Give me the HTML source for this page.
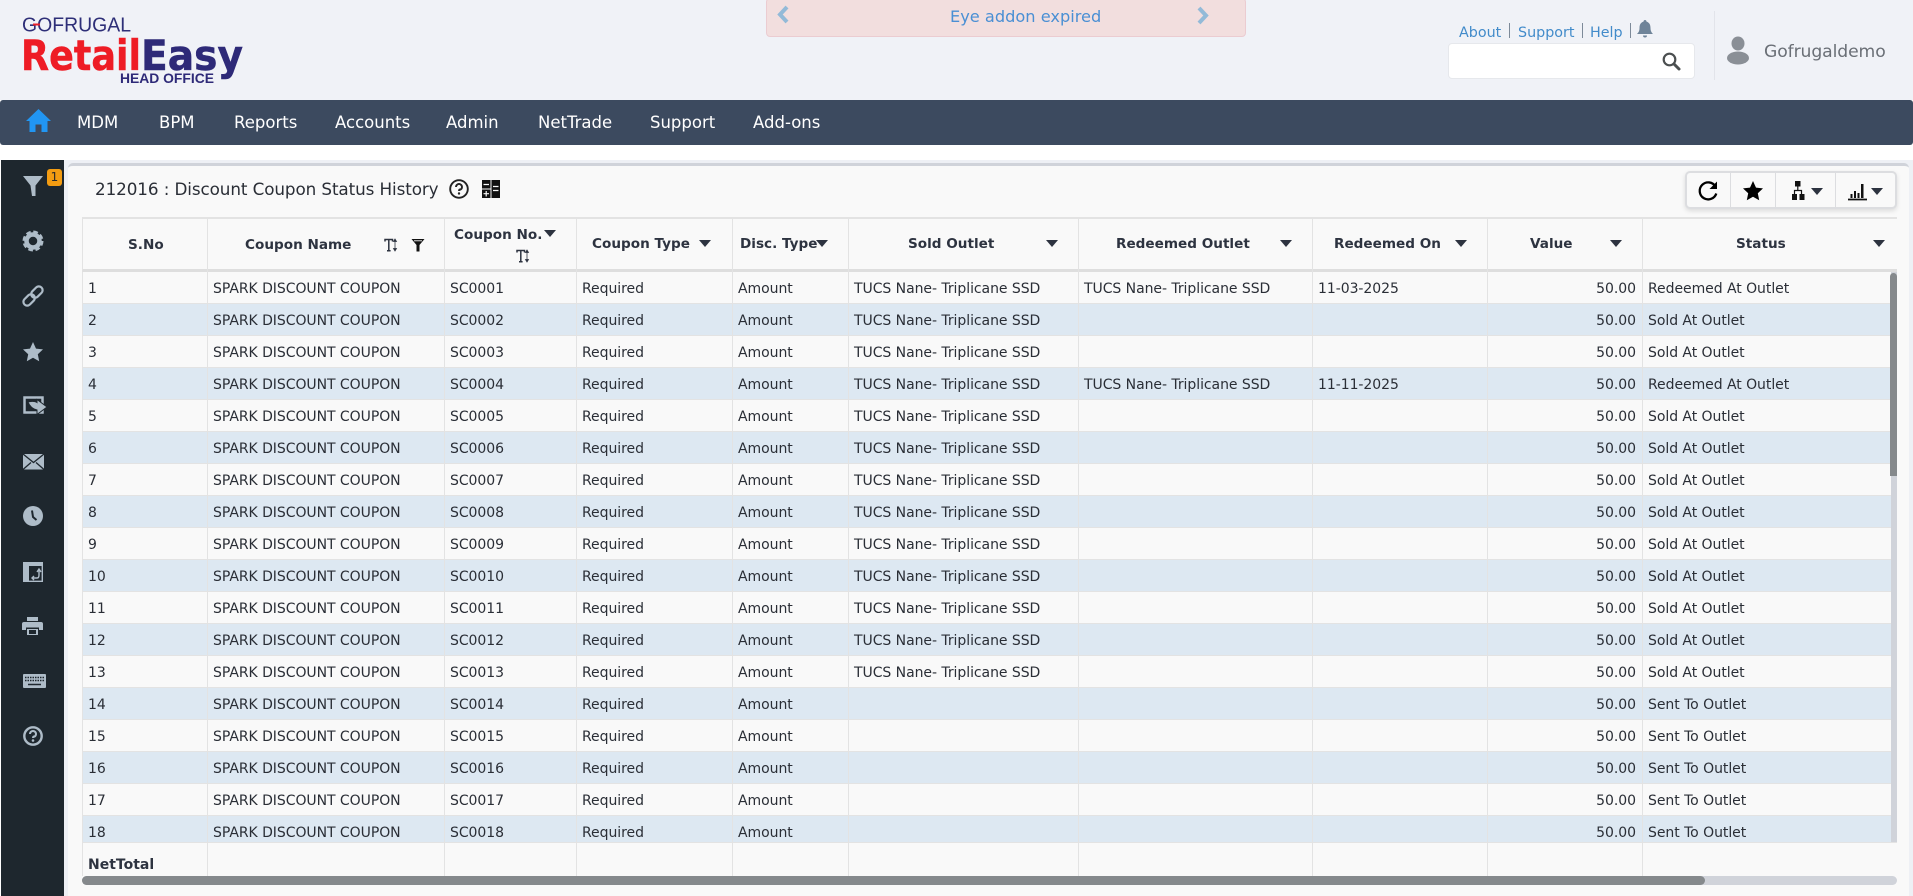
<!DOCTYPE html>
<html><head><meta charset="utf-8"><title>Discount Coupon Status History</title>
<style>
*{box-sizing:border-box}
html,body{margin:0;padding:0;width:1913px;height:896px;overflow:hidden;background:#fff;font-family:"DejaVu Sans","Liberation Sans",sans-serif;color:#2d323a}
.a{position:absolute}
.t{position:absolute;white-space:nowrap;line-height:20px}
svg{position:absolute;overflow:visible}
#hd{left:0;top:0;width:1913px;height:100px;background:#f0f2f7}
#nav{left:0;top:100px;width:1913px;height:45px;background:#3c4a5f;border-radius:3px}
#nav .t{color:#fff;font-size:16.5px;top:12.5px}
#lk .t{font-size:14.3px;color:#428bca;top:23px}
.sep{position:absolute;width:1px;top:23px;height:15px;background:#7d8a99}
#side{left:1px;top:160px;width:63px;height:736px;background:#1e272e}
#bgr{left:64px;top:160px;width:1849px;height:736px;background:#eef0f5}
#panel{left:68px;top:163px;width:1841px;height:733px;background:#f9f9f9;border-top:3px solid #d0d3da;border-radius:5px 5px 0 0}
#tb{position:absolute;left:82px;top:272px;width:1815px;height:570px;overflow:hidden}
table{border-collapse:separate;border-spacing:0;table-layout:fixed;width:1815px;font-size:14px;letter-spacing:-.05px}
td{height:32px;padding:2px 5px 0;white-space:nowrap;overflow:hidden;border-right:1px solid #e3e3e3;border-bottom:1px solid #e3e3e3;vertical-align:middle;color:#2a2e36}
td:first-child{border-left:1px solid #e3e3e3}
tr:nth-child(even) td{background:#dde8f2}
td.r{text-align:right;padding-right:6px}
#th{position:absolute;left:82px;top:217px;width:1815px;height:55px;border-top:2px solid #e3e3e3;border-bottom:3px solid #dedede;border-left:1px solid #e3e3e3}
.v{position:absolute;width:1px;background:#e3e3e3}
.h{position:absolute;font-weight:bold;font-size:13.6px;white-space:nowrap;line-height:18px;color:#2d3340}
.c{position:absolute;width:0;height:0;border-left:6px solid transparent;border-right:6px solid transparent;border-top:7px solid #2d3340}
#tool{left:1685px;top:171px;width:212px;height:38px;background:#f9f9f9;border:2px solid #dcdde0;border-radius:5px;box-shadow:0 2px 5px rgba(0,0,0,.12)}
</style></head><body>
<div class="a" id="hd"></div>

<svg style="left:0;top:0" width="260" height="100" viewBox="0 0 260 100">
<text x="22" y="31.5" font-family="Liberation Sans" font-size="20.5" fill="#2e2f78" textLength="109" lengthAdjust="spacingAndGlyphs">GOFRUGAL</text>
<rect x="33" y="23.5" width="7" height="2" fill="#e8202a"/>
<text x="21" y="70" font-family="DejaVu Sans" font-weight="bold" font-size="42" fill="#ee1c25" stroke="#ee1c25" stroke-width=".5" textLength="120" lengthAdjust="spacingAndGlyphs">Retail</text>
<text x="141" y="70" font-family="DejaVu Sans" font-weight="bold" font-size="42" fill="#2e2a78" stroke="#2e2a78" stroke-width=".5" textLength="102" lengthAdjust="spacingAndGlyphs">Easy</text>
<text x="120" y="83" font-family="Liberation Sans" font-weight="bold" font-size="14" fill="#2e2a78" textLength="94" lengthAdjust="spacingAndGlyphs">HEAD OFFICE</text>
</svg>

<div class="a" style="left:766px;top:-2px;width:480px;height:38.5px;background:#f2dede;border:1px solid #ebccd1;border-radius:4px"></div>
<div class="t" style="left:950px;top:7px;font-size:16.2px;color:#4a8fd4">Eye addon expired</div>
<svg style="left:776px;top:5px" width="14" height="20"><path d="M11 2L4 9.5l7 7.5" fill="none" stroke="#93bad8" stroke-width="4"/></svg>
<svg style="left:1196px;top:6px" width="14" height="20"><path d="M3 2l7 7.5L3 17" fill="none" stroke="#93bad8" stroke-width="4"/></svg>

<div id="lk">
<div class="t" style="left:1459px">About</div><div class="sep" style="left:1509px"></div>
<div class="t" style="left:1518px">Support</div><div class="sep" style="left:1582px"></div>
<div class="t" style="left:1590px">Help</div><div class="sep" style="left:1630px"></div>
</div>
<svg style="left:1637px;top:20px" width="16" height="19"><path d="M8 0c1 0 1.5.7 1.5 1.6C12.5 2.5 13.5 5 13.5 8c0 3 1 4.5 2.5 6H0c1.500-1.500 2.500-3 2.500-6 0-3 1-5.500 4-6.400C6.500.7 7 0 8 0zM6 15.500h4a2 2 0 0 1-4 0z" fill="#6f8499"/></svg>
<div class="a" style="left:1448px;top:43px;width:247px;height:36px;background:#fff;border:1px solid #e6e8ec;border-radius:4px"></div>
<svg style="left:1662px;top:52px" width="19" height="19"><circle cx="7.500" cy="7.500" r="5.800" fill="none" stroke="#4b4f50" stroke-width="2.200"/><path d="M12 12l5 5" stroke="#4b4f50" stroke-width="3" stroke-linecap="round"/></svg>
<div class="a" style="left:1714px;top:11px;width:1px;height:69px;background:#e2e4ea"></div>
<svg style="left:1725px;top:36px" width="26" height="29"><ellipse cx="13" cy="7.500" rx="6.500" ry="7" fill="#8a8f96"/><ellipse cx="13" cy="22" rx="11" ry="6.500" fill="#8a8f96"/></svg>
<div class="t" style="left:1764px;top:42px;font-size:17.2px;color:#6a6f76;letter-spacing:-.1px">Gofrugaldemo</div>

<div class="a" id="nav">
<div class="t" style="left:77px">MDM</div>
<div class="t" style="left:159px">BPM</div>
<div class="t" style="left:234px">Reports</div>
<div class="t" style="left:335px">Accounts</div>
<div class="t" style="left:446px">Admin</div>
<div class="t" style="left:538px">NetTrade</div>
<div class="t" style="left:650px">Support</div>
<div class="t" style="left:753px">Add-ons</div>
</div>
<svg style="left:26px;top:109px" width="25" height="23"><path d="M12.500 0L25 12h-3.500v11h-6v-7.500h-6V23h-6V12H0z" fill="#2196f3"/></svg>

<div class="a" id="bgr"></div>
<div class="a" id="side"></div>
<div class="a" id="panel"></div>

<!-- sidebar icons -->
<svg style="left:23px;top:176px" width="20" height="20"><path d="M0 0h20l-7.500 9.500V20H9L7.500 9.500z" fill="#aebcc8"/></svg>
<div class="a" style="left:47px;top:169px;width:15px;height:17px;background:#f39c12;border-radius:3px;font-size:12px;line-height:17px;text-align:center;color:#2a2a2a">1</div>
<svg style="left:33px;top:241px" width="1" height="1"><circle r="6.500" fill="none" stroke="#aebcc8" stroke-width="4.500"/><circle r="9" fill="none" stroke="#aebcc8" stroke-width="3" stroke-dasharray="4.500 2.570"/></svg>
<svg style="left:33px;top:296px" width="1" height="1"><g transform="rotate(-45)" fill="none" stroke="#aebcc8" stroke-width="2.200"><rect x="-12" y="-3.800" width="13" height="7.600" rx="3.800"/><rect x="-1" y="-3.800" width="13" height="7.600" rx="3.800"/></g></svg>
<svg style="left:23px;top:342px" width="20" height="20"><path d="M10 0l3 6.600 7 .8-5.200 4.800 1.400 7L10 15.700 3.800 19.200l1.400-7L0 7.400l7-.8z" fill="#aebcc8"/></svg>
<svg style="left:23px;top:396px" width="25" height="20"><path d="M1.500 1.500h18v15h-18z" fill="none" stroke="#aebcc8" stroke-width="2.500"/><path d="M5 6c4-1 7-1 9 .5V3.500l10 7.500-10 7.500V14C10 13 7 11 5 6z" fill="#aebcc8" stroke="#1e272e"/></svg>
<svg style="left:22.500px;top:453.500px" width="21" height="16"><rect width="21" height="15.500" fill="#aebcc8"/><path d="M0 0l10.500 8.500L21 0M0 15.500l8-7M21 15.500l-8-7" fill="none" stroke="#1e272e" stroke-width="1.300"/></svg>
<svg style="left:33px;top:516px" width="1" height="1"><circle r="10" fill="#aebcc8"/><path d="M-1-5.500L0 1l3.500 3" fill="none" stroke="#1e272e" stroke-width="2"/></svg>
<svg style="left:23px;top:561.500px" width="20" height="20"><path d="M.7.7h18.600v18.600H.7z" fill="none" stroke="#aebcc8" stroke-width="1.400"/><path d="M1 1h18v3H1zM1 4h5v15H1z" fill="#aebcc8"/><path d="M9 16h5q2 0 2-3V8M14 10l2-3 2 3M11 14l-2 2 2 2" fill="none" stroke="#aebcc8" stroke-width="1.400"/></svg>
<svg style="left:22px;top:617px" width="21" height="18"><path d="M5 0h11v4H5zM2 5h17a2 2 0 0 1 2 2v6h-4v-2.500H4V13H0V7a2 2 0 0 1 2-2zM5 12h11v6H5z" fill="#aebcc8"/><rect x="7" y="13" width="7" height="4" fill="#1e272e"/></svg>
<svg style="left:23px;top:674px" width="23" height="14"><rect width="23" height="14" rx="1" fill="#aebcc8"/><path d="M2 3.500h19M2 6.500h19" stroke="#1e272e" stroke-width="1.500" stroke-dasharray="1.500 1"/><path d="M5 10.500h13" stroke="#1e272e" stroke-width="1.500"/></svg>
<svg style="left:33px;top:736px" width="1" height="1"><circle r="8.700" fill="none" stroke="#aebcc8" stroke-width="2.400"/><path d="M-3-2a3 3 0 1 1 4.500 2.600C.5.200 0 .800 0 2" fill="none" stroke="#aebcc8" stroke-width="2"/><circle cx="0" cy="4.500" r="1.300" fill="#aebcc8"/></svg>

<!-- title -->
<div class="t" style="left:95px;top:179px;font-size:16.8px;color:#2a2e36;letter-spacing:-.1px">212016 : Discount Coupon Status History</div>
<svg style="left:459px;top:189px" width="1" height="1"><circle r="8.800" fill="none" stroke="#222" stroke-width="1.900"/><path d="M-3-2a3 3 0 1 1 4.500 2.600C.5.200 0 .800 0 2" fill="none" stroke="#222" stroke-width="1.900"/><circle cx="0" cy="4.500" r="1.200" fill="#222"/></svg>
<svg style="left:482px;top:180px" width="18" height="18"><rect width="8.500" height="8.500" fill="#111"/><rect x="9.500" width="8.500" height="18" fill="#111"/><rect y="9.500" width="8.500" height="8.500" fill="#111"/><path d="M1.500 4.500h5.500M11 6.500h5.500M11 10.500h5.500M1.500 13.700h5.500M4.200 11v5.500" stroke="#f9f9f9" stroke-width="1.200"/></svg>

<!-- toolbar -->
<div class="a" id="tool"></div>
<div class="a" style="left:1730px;top:172px;width:1px;height:36px;background:#dcdde0"></div>
<div class="a" style="left:1775px;top:172px;width:1px;height:36px;background:#dcdde0"></div>
<div class="a" style="left:1835px;top:172px;width:1px;height:36px;background:#dcdde0"></div>
<svg style="left:1708px;top:191px" width="1" height="1"><path d="M7.500-4.500A8.500 8.500 0 1 0 8.300 2.500" fill="none" stroke="#000" stroke-width="2.300"/><path d="M9-9.500v7.500H1.500z" fill="#000"/></svg>
<svg style="left:1743px;top:181px" width="20" height="20"><path d="M10 0l3 6.600 7 .8-5.200 4.800 1.400 7L10 15.700 3.800 19.200l1.400-7L0 7.400l7-.8z" fill="#000"/></svg>
<svg style="left:1790px;top:181px" width="16" height="20"><path d="M5 0h5.500v5.500H5zM2 13h5v6H2zM9.500 13h5v6h-5z" fill="#111"/><path d="M7.800 5.500V9.500M4.500 13V9.500h7V13" fill="none" stroke="#111" stroke-width="1.200"/></svg>
<div class="c" style="left:1811px;top:188px;border-top-width:7px"></div>
<svg style="left:1848px;top:181px" width="20" height="20"><path d="M0 18.500h19" stroke="#111" stroke-width="1.800"/><path d="M2.500 13h2v4h-2zM6 10h2v7H6zM9.500 12h2v5h-2zM13 3h2.500v14H13z" fill="#111"/></svg>
<div class="c" style="left:1871px;top:188px;border-top-width:7px"></div>

<!-- table header -->
<div id="th"></div>
<div class="v" style="left:207px;top:217px;height:55px"></div>
<div class="v" style="left:444px;top:217px;height:55px"></div>
<div class="v" style="left:576px;top:217px;height:55px"></div>
<div class="v" style="left:732px;top:217px;height:55px"></div>
<div class="v" style="left:848px;top:217px;height:55px"></div>
<div class="v" style="left:1078px;top:217px;height:55px"></div>
<div class="v" style="left:1312px;top:217px;height:55px"></div>
<div class="v" style="left:1487px;top:217px;height:55px"></div>
<div class="v" style="left:1642px;top:217px;height:55px"></div>
<div class="h" style="left:128px;top:236px">S.No</div>
<div class="h" style="left:245px;top:236px">Coupon Name</div>
<svg style="left:384px;top:238px" width="14" height="14"><path d="M1 3.500V1.500h7.500v2M4.800 1.500v11M3 12.800h3.600" fill="none" stroke="#2d3340" stroke-width="1.500"/><path d="M11 2v10M9.500 3.500L11 1l1.500 2.500zM9.500 10.500L11 13l1.500-2.500z" fill="#2d3340" stroke="#2d3340" stroke-width=".8"/></svg>
<svg style="left:411px;top:238px" width="14" height="14"><path d="M.5 1h13L8.500 7v6.500h-3V7z" fill="#111"/><path d="M3 2.800h8" stroke="#f9f9f9" stroke-width=".9"/></svg>
<div class="h" style="left:454px;top:226px">Coupon No.</div>
<div class="c" style="left:544px;top:230px"></div>
<svg style="left:516px;top:249px" width="14" height="14"><path d="M1 3.500V1.500h7.500v2M4.800 1.500v11M3 12.800h3.600" fill="none" stroke="#2d3340" stroke-width="1.500"/><path d="M11 2v10M9.500 3.500L11 1l1.500 2.500zM9.500 10.500L11 13l1.500-2.500z" fill="#2d3340" stroke="#2d3340" stroke-width=".8"/></svg>
<div class="h" style="left:592px;top:235px">Coupon Type</div>
<div class="c" style="left:699px;top:240px"></div>
<div class="h" style="left:740px;top:235px">Disc. Type</div>
<div class="c" style="left:816px;top:240px"></div>
<div class="h" style="left:908px;top:235px">Sold Outlet</div>
<div class="c" style="left:1046px;top:240px"></div>
<div class="h" style="left:1116px;top:235px">Redeemed Outlet</div>
<div class="c" style="left:1280px;top:240px"></div>
<div class="h" style="left:1334px;top:235px">Redeemed On</div>
<div class="c" style="left:1455px;top:240px"></div>
<div class="h" style="left:1530px;top:235px">Value</div>
<div class="c" style="left:1610px;top:240px"></div>
<div class="h" style="left:1736px;top:235px">Status</div>
<div class="c" style="left:1873px;top:240px"></div>

<!-- table body -->
<div id="tb"><table>
<colgroup><col style="width:126px"><col style="width:237px"><col style="width:132px"><col style="width:156px"><col style="width:116px"><col style="width:230px"><col style="width:234px"><col style="width:175px"><col style="width:155px"><col style="width:254px"></colgroup>
<tr><td>1</td><td>SPARK DISCOUNT COUPON</td><td>SC0001</td><td>Required</td><td>Amount</td><td>TUCS Nane- Triplicane SSD</td><td>TUCS Nane- Triplicane SSD</td><td>11-03-2025</td><td class="r">50.00</td><td>Redeemed At Outlet</td></tr>
<tr><td>2</td><td>SPARK DISCOUNT COUPON</td><td>SC0002</td><td>Required</td><td>Amount</td><td>TUCS Nane- Triplicane SSD</td><td></td><td></td><td class="r">50.00</td><td>Sold At Outlet</td></tr>
<tr><td>3</td><td>SPARK DISCOUNT COUPON</td><td>SC0003</td><td>Required</td><td>Amount</td><td>TUCS Nane- Triplicane SSD</td><td></td><td></td><td class="r">50.00</td><td>Sold At Outlet</td></tr>
<tr><td>4</td><td>SPARK DISCOUNT COUPON</td><td>SC0004</td><td>Required</td><td>Amount</td><td>TUCS Nane- Triplicane SSD</td><td>TUCS Nane- Triplicane SSD</td><td>11-11-2025</td><td class="r">50.00</td><td>Redeemed At Outlet</td></tr>
<tr><td>5</td><td>SPARK DISCOUNT COUPON</td><td>SC0005</td><td>Required</td><td>Amount</td><td>TUCS Nane- Triplicane SSD</td><td></td><td></td><td class="r">50.00</td><td>Sold At Outlet</td></tr>
<tr><td>6</td><td>SPARK DISCOUNT COUPON</td><td>SC0006</td><td>Required</td><td>Amount</td><td>TUCS Nane- Triplicane SSD</td><td></td><td></td><td class="r">50.00</td><td>Sold At Outlet</td></tr>
<tr><td>7</td><td>SPARK DISCOUNT COUPON</td><td>SC0007</td><td>Required</td><td>Amount</td><td>TUCS Nane- Triplicane SSD</td><td></td><td></td><td class="r">50.00</td><td>Sold At Outlet</td></tr>
<tr><td>8</td><td>SPARK DISCOUNT COUPON</td><td>SC0008</td><td>Required</td><td>Amount</td><td>TUCS Nane- Triplicane SSD</td><td></td><td></td><td class="r">50.00</td><td>Sold At Outlet</td></tr>
<tr><td>9</td><td>SPARK DISCOUNT COUPON</td><td>SC0009</td><td>Required</td><td>Amount</td><td>TUCS Nane- Triplicane SSD</td><td></td><td></td><td class="r">50.00</td><td>Sold At Outlet</td></tr>
<tr><td>10</td><td>SPARK DISCOUNT COUPON</td><td>SC0010</td><td>Required</td><td>Amount</td><td>TUCS Nane- Triplicane SSD</td><td></td><td></td><td class="r">50.00</td><td>Sold At Outlet</td></tr>
<tr><td>11</td><td>SPARK DISCOUNT COUPON</td><td>SC0011</td><td>Required</td><td>Amount</td><td>TUCS Nane- Triplicane SSD</td><td></td><td></td><td class="r">50.00</td><td>Sold At Outlet</td></tr>
<tr><td>12</td><td>SPARK DISCOUNT COUPON</td><td>SC0012</td><td>Required</td><td>Amount</td><td>TUCS Nane- Triplicane SSD</td><td></td><td></td><td class="r">50.00</td><td>Sold At Outlet</td></tr>
<tr><td>13</td><td>SPARK DISCOUNT COUPON</td><td>SC0013</td><td>Required</td><td>Amount</td><td>TUCS Nane- Triplicane SSD</td><td></td><td></td><td class="r">50.00</td><td>Sold At Outlet</td></tr>
<tr><td>14</td><td>SPARK DISCOUNT COUPON</td><td>SC0014</td><td>Required</td><td>Amount</td><td></td><td></td><td></td><td class="r">50.00</td><td>Sent To Outlet</td></tr>
<tr><td>15</td><td>SPARK DISCOUNT COUPON</td><td>SC0015</td><td>Required</td><td>Amount</td><td></td><td></td><td></td><td class="r">50.00</td><td>Sent To Outlet</td></tr>
<tr><td>16</td><td>SPARK DISCOUNT COUPON</td><td>SC0016</td><td>Required</td><td>Amount</td><td></td><td></td><td></td><td class="r">50.00</td><td>Sent To Outlet</td></tr>
<tr><td>17</td><td>SPARK DISCOUNT COUPON</td><td>SC0017</td><td>Required</td><td>Amount</td><td></td><td></td><td></td><td class="r">50.00</td><td>Sent To Outlet</td></tr>
<tr><td>18</td><td>SPARK DISCOUNT COUPON</td><td>SC0018</td><td>Required</td><td>Amount</td><td></td><td></td><td></td><td class="r">50.00</td><td>Sent To Outlet</td></tr>
</table></div>

<!-- vertical scrollbar -->
<div class="a" style="left:1891px;top:272px;width:6px;height:570px;background:#d0d3da"></div>
<div class="a" style="left:1890px;top:273px;width:7px;height:203px;background:#85898c;border-radius:4px 4px 0 0"></div>

<!-- footer -->
<div class="a" style="left:82px;top:842px;width:1815px;height:34px;border-top:1px solid #e3e3e3;border-left:1px solid #e3e3e3"></div>
<div class="v" style="left:207px;top:842px;height:34px"></div>
<div class="v" style="left:444px;top:842px;height:34px"></div>
<div class="v" style="left:576px;top:842px;height:34px"></div>
<div class="v" style="left:732px;top:842px;height:34px"></div>
<div class="v" style="left:848px;top:842px;height:34px"></div>
<div class="v" style="left:1078px;top:842px;height:34px"></div>
<div class="v" style="left:1312px;top:842px;height:34px"></div>
<div class="v" style="left:1487px;top:842px;height:34px"></div>
<div class="v" style="left:1642px;top:842px;height:34px"></div>
<div class="h" style="left:88px;top:856px;font-size:14px">NetTotal</div>
<div class="a" style="left:82px;top:876px;width:1815px;height:9px;background:#d0d3da;border-radius:5px"></div>
<div class="a" style="left:82px;top:876px;width:1623px;height:9px;background:#85898c;border-radius:5px"></div>
</body></html>
